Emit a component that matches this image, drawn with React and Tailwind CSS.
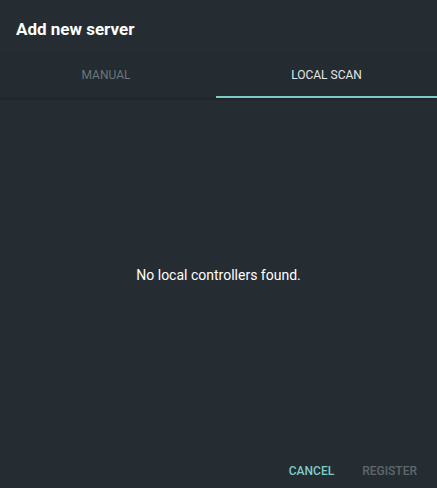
export default function App() {
  return (
    <div className="w-[437px] h-[488px] bg-[#252d33] flex flex-col" style={{ fontFamily: 'Roboto, "Liberation Sans", sans-serif' }}>
      <div className="h-[54px] flex items-center px-4 shrink-0">
        <h1 className="text-[17px] font-bold text-white pt-[6px]">Add new server</h1>
      </div>
      <div className="h-[44px] flex shrink-0 bg-[#242b31] shadow-[0_1px_2px_rgba(0,0,0,0.3)] relative z-10">
        <div className="w-[216px] flex items-center justify-center text-[12px] text-[#6d767b] pb-[2px] pr-[4px]">MANUAL</div>
        <div className="flex-1 flex flex-col">
          <div className="flex-1 flex items-center justify-center text-[12px] text-[#e3e5e6]">LOCAL SCAN</div>
          <div className="h-[2px] bg-[#80cbc4]"></div>
        </div>
      </div>
      <div className="flex-1 flex items-center justify-center">
        <p className="text-[14px] text-white">No local controllers found.</p>
      </div>
      <div className="h-[36px] flex items-center justify-end pr-[12px] pt-[2px] gap-[12px] shrink-0">
        <button className="px-2 text-[12px] font-medium text-[#80cbc4]">CANCEL</button>
        <button className="px-2 text-[12px] font-medium text-[#5e676c]">REGISTER</button>
      </div>
    </div>
  );
}
